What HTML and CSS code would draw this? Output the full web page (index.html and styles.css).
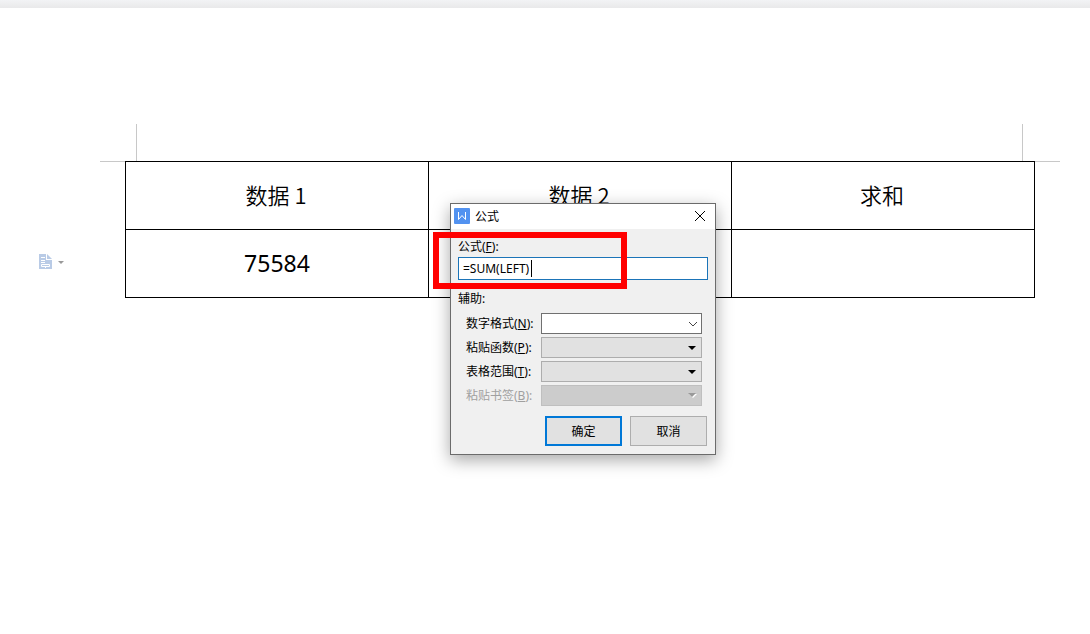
FILE: index.html
```html
<!DOCTYPE html>
<html lang="zh-CN">
<head>
    <meta charset="UTF-8">
    <meta name="viewport" content="width=device-width, initial-scale=1.0">
    <title>公式</title>
    <link rel="stylesheet" href="styles.css">
</head>
<body>
    <div class="ribbon-edge"></div>

    <main class="document">
        <aside class="gutter">
            <button class="paste-options" type="button" aria-label="段落布局">
                <svg width="14" height="16" viewBox="0 0 14 16">
                    <path d="M0 0h7v6h6v9H0z" fill="#b9cbe6"/>
                    <path d="M8 0l5 5H8z" fill="#b9cbe6"/>
                    <path d="M2 3.500h4M2 6.500h4M2 8.500h4M6.500 12v2" stroke="#fff" fill="none"/>
                    <path d="M2.500 10.500h8v2h-8z" stroke="#fff" fill="none"/>
                </svg>
                <svg width="6" height="3" viewBox="0 0 6 3">
                    <path d="M0 0h6L3 3z" fill="#999"/>
                </svg>
            </button>
        </aside>

        <section class="page">
            <div class="crop-marks"></div>
            <table class="data-table">
                <thead>
                    <tr>
                        <th scope="col">数据 1</th>
                        <th scope="col">数据 2</th>
                        <th scope="col">求和</th>
                    </tr>
                </thead>
                <tbody>
                    <tr>
                        <td>75584</td>
                        <td></td>
                        <td></td>
                    </tr>
                </tbody>
            </table>
        </section>
    </main>

    <div class="dialog" role="dialog" aria-labelledby="dialogTitle">
        <header class="title-bar">
            <svg width="16" height="16" viewBox="0 0 16 16">
                <rect width="16" height="16" rx="1" fill="#5292f0"/>
                <path d="M4.500 4v7.500L8 7.500l3.500 4V4" stroke="#fff" fill="none"/>
            </svg>
            <span class="title" id="dialogTitle">公式</span>
            <button class="close" type="button" aria-label="关闭">
                <svg width="12" height="12" viewBox="0 0 12 12">
                    <path d="M1 1l10 10M11 1L1 11" stroke="#000" fill="none"/>
                </svg>
            </button>
        </header>

        <form class="dialog-body">
            <label class="formula-label" for="formula">公式(<u>F</u>):</label>
            <div class="formula-field">
                <input class="formula" id="formula" type="text" value="=SUM(LEFT)">
                <span class="caret"></span>
            </div>

            <div class="group-label">辅助:</div>
            <div class="options">
                <label for="numberFormat">数字格式(<u>N</u>):</label>
                <select class="combo editable" id="numberFormat"></select>

                <label for="pasteFunction">粘贴函数(<u>P</u>):</label>
                <select class="combo" id="pasteFunction"></select>

                <label for="tableRange">表格范围(<u>T</u>):</label>
                <select class="combo" id="tableRange"></select>

                <label class="disabled" for="pasteBookmark">粘贴书签(<u>B</u>):</label>
                <select class="combo" id="pasteBookmark" disabled></select>
            </div>

            <div class="buttons">
                <button class="btn primary" type="button">确定</button>
                <button class="btn" type="button">取消</button>
            </div>
        </form>

        <div class="highlight"></div>
    </div>
</body>
</html>
```

FILE: styles.css
```css
* {
    box-sizing: border-box;
}
body {
    margin: 0;
    min-height: 100vh;
    position: relative;
    background: #fff;
    color: #000;
    font-family: "Noto Sans", "Noto Sans CJK SC", sans-serif;
    font-size: 12px;
}
button, input, select {
    font: inherit;
    color: inherit;
}
.ribbon-edge {
    height: 8px;
    background: linear-gradient(#f2f3f5, #e9e9ea);
}

/* document */
.document {
    display: flex;
    padding: 116px 30px 0 0;
}
.gutter {
    width: 100px;
    padding: 130px 0 0 39px;
}
.paste-options {
    display: flex;
    align-items: center;
    gap: 5px;
    padding: 0;
    border: none;
    background: none;
}
.page {
    flex: 1;
    background: linear-gradient(#c8c8c8, #c8c8c8) 0 37px / 100% 1px no-repeat;
}
.crop-marks {
    height: 37px;
    margin: 0 37px 0 36px;
    border-left: 1px solid #c8c8c8;
    border-right: 1px solid #c8c8c8;
}
.data-table {
    width: calc(100% - 50px);
    margin: 0 25px;
    border-collapse: collapse;
    table-layout: fixed;
    background: #fff;
    text-align: center;
}
.data-table th,
.data-table td {
    height: 68px;
    padding: 0 2px 3px 0;
    border: 1px solid #000;
    font-family: "Noto Sans CJK SC", sans-serif;
    font-weight: 350;
    font-size: 22px;
}
.data-table td {
    padding: 0 0 2px;
    font-family: "Noto Sans", sans-serif;
    font-weight: 400;
    font-size: 23px;
}

/* formula dialog */
.dialog {
    position: absolute;
    top: 203px;
    left: calc(50% - 95px);
    width: 266px;
    border: 1px solid #6b6b6b;
    background: #f0f0f0;
    box-shadow: 0 5px 16px rgba(0, 0, 0, 0.35);
}
.title-bar {
    display: flex;
    align-items: center;
    gap: 5px;
    height: 25px;
    padding: 0 9px 1px 3px;
    background: #fff;
}
.title {
    flex: 1;
}
.close {
    display: flex;
    padding: 0;
    border: none;
    background: none;
}
.dialog-body {
    padding: 9px 7px 8px;
}
.formula-label,
.group-label {
    display: block;
    height: 19px;
    line-height: 18px;
}
.formula-field {
    position: relative;
}
.formula {
    display: block;
    width: 100%;
    height: 23px;
    padding: 0 4px;
    border: 1px solid #1b74b8;
    background: #fff;
    outline: none;
}
.caret {
    position: absolute;
    top: 3px;
    left: 73px;
    width: 1px;
    height: 17px;
    background: #000;
}
.group-label {
    margin-top: 10px;
}
.options {
    display: grid;
    grid-template-columns: 75px 1fr;
    row-gap: 3px;
    align-items: center;
    margin: 4px 6px 0 8px;
    line-height: 20px;
}
.options .disabled {
    color: #a0a0a0;
}
.combo {
    appearance: none;
    width: 100%;
    height: 21px;
    border: 1px solid #adadad;
    border-radius: 0;
    background: #e1e1e1 url("data:image/svg+xml,%3Csvg xmlns='http://www.w3.org/2000/svg' width='8' height='4'%3E%3Cpath d='M0 0h8L4 4z'/%3E%3C/svg%3E") no-repeat right 5px center;
}
.combo.editable {
    border-color: #707070;
    background: #fff url("data:image/svg+xml,%3Csvg xmlns='http://www.w3.org/2000/svg' width='10' height='6'%3E%3Cpath d='M1 1l4 4 4-4' fill='none' stroke='%23444'/%3E%3C/svg%3E") no-repeat right 3px center;
}
.combo:disabled {
    opacity: 1;
    border-color: #bfbfbf;
    background: #ccc url("data:image/svg+xml,%3Csvg xmlns='http://www.w3.org/2000/svg' width='9' height='5'%3E%3Cpath d='M1 1h8L5 5z' fill='%23fff'/%3E%3Cpath d='M0 0h8L4 4z' fill='%23999'/%3E%3C/svg%3E") no-repeat right 4px center;
}
.buttons {
    display: flex;
    justify-content: flex-end;
    gap: 8px;
    margin-top: 10px;
    padding-right: 1px;
}
.btn {
    width: 77px;
    height: 30px;
    padding: 0;
    border: 1px solid #adadad;
    background: #e1e1e1;
}
.btn.primary {
    border: 2px solid #0078d7;
}

/* red marker around the formula */
.highlight {
    position: absolute;
    top: 28px;
    left: -18px;
    width: 194px;
    height: 57px;
    border: 6px solid #f00;
    pointer-events: none;
}
```
